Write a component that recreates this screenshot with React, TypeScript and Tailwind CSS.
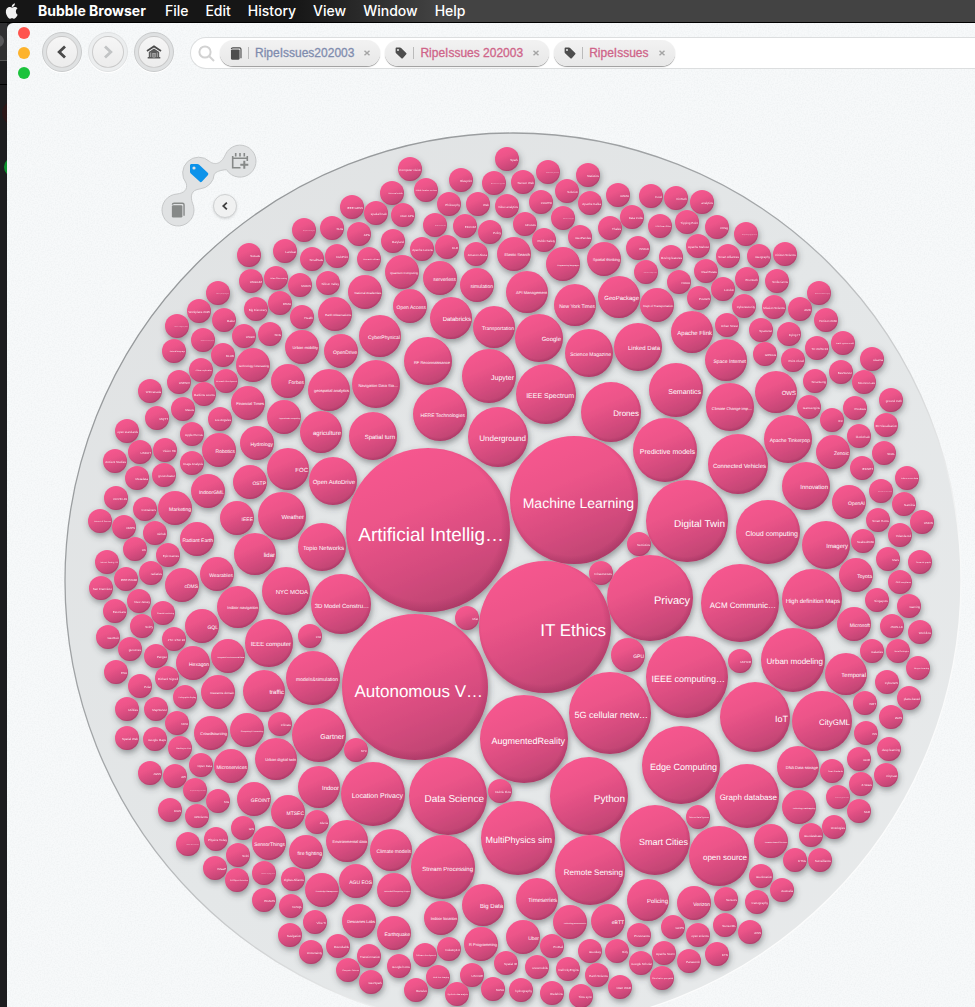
import React from "react";

type Bubble = [x: number, y: number, r: number, label: string];

const TOPICS: Bubble[] = [
  [428, 530, 82, "Artificial Intellig…"],
  [574, 500, 64, "Machine Learning"],
  [545, 627, 66, "IT Ethics"],
  [415, 687, 73, "Autonomous V…"],
  [524, 739, 44, "AugmentedReality"],
  [650, 598, 43, "Privacy"],
  [687, 521, 41, "Digital Twin"],
  [687, 677, 41, "IEEE computing…"],
  [610, 713, 41, "5G cellular netw…"],
  [448, 796, 39, "Data Science"],
  [589, 796, 39, "Python"],
  [740, 603, 39, "ACM Communic…"],
  [681, 765, 39, "Edge Computing"],
  [518, 838, 37, "MultiPhysics sim"],
  [590, 870, 35, "Remote Sensing"],
  [655, 840, 35, "Smart Cities"],
  [755, 717, 35, "IoT"],
  [768, 532, 32, "Cloud computing"],
  [665, 450, 32, "Predictive models"],
  [793, 660, 32, "Urban modeling"],
  [747, 796, 32, "Graph database"],
  [373, 794, 32, "Location Privacy"],
  [443, 867, 32, "Stream Processing"],
  [738, 464, 30, "Connected Vehicles"],
  [812, 599, 30, "High definition Maps"],
  [822, 721, 30, "CityGML"],
  [719, 856, 30, "open source"],
  [341, 604, 30, "3D Model Constru…"],
  [546, 394, 30, "IEEE Spectrum"],
  [611, 412, 30, "Drones"],
  [498, 437, 30, "Underground"],
  [489, 376, 27, "Jupyter"],
  [440, 414, 27, "HERE Technologies"],
  [676, 390, 27, "Semantics"],
  [313, 678, 27, "models&simulation"],
  [319, 735, 27, "Gartner"],
  [428, 361, 24, "RF Reconnaissance"],
  [539, 338, 24, "Google"],
  [376, 384, 24, "Navigation Data Sta…"],
  [589, 353, 24, "Science Magazine"],
  [638, 347, 24, "Linked Data"],
  [373, 436, 24, "Spatial turn"],
  [333, 481, 24, "Open AutoDrive"],
  [282, 516, 24, "Weather"],
  [322, 547, 24, "Topio Networks"],
  [286, 591, 24, "NYC MODA"],
  [269, 643, 24, "IEEE computer"],
  [730, 407, 24, "Climate Change imp…"],
  [788, 439, 24, "Apache Tinkerpop"],
  [806, 486, 24, "Innovation"],
  [826, 545, 24, "Imagery"],
  [527, 292, 21, "API Management"],
  [451, 318, 21, "Databricks"],
  [575, 305, 21, "New York Times"],
  [619, 297, 21, "GeoPackage"],
  [494, 327, 21, "Transportation"],
  [380, 336, 21, "CyberPhysical"],
  [329, 390, 21, "geospatial analytics"],
  [321, 432, 21, "agriculture"],
  [288, 469, 21, "FOC"],
  [255, 554, 21, "lidar"],
  [238, 607, 21, "Indoor navigation"],
  [264, 691, 21, "traffic"],
  [276, 759, 21, "Urban digital twin"],
  [319, 787, 21, "Indoor"],
  [347, 841, 21, "Environmental data"],
  [391, 850, 21, "Climate models"],
  [483, 905, 21, "Big Data"],
  [537, 899, 21, "Timeseries"],
  [648, 900, 21, "Policing"],
  [798, 767, 21, "DNA Data storage"],
  [846, 674, 21, "Temporal"],
  [692, 332, 21, "Apache Flink"],
  [726, 360, 21, "Space Internet"],
  [776, 392, 21, "OWS"],
  [514, 254, 17, "Elastic Search"],
  [402, 272, 17, "Quantum Computing"],
  [440, 278, 17, "serverless"],
  [477, 285, 17, "simulation"],
  [563, 264, 17, "Programming languages"],
  [604, 259, 17, "Spatial thinking"],
  [410, 306, 17, "Open Access"],
  [657, 305, 17, "Dept of Transportation"],
  [365, 292, 17, "National Academies"],
  [335, 314, 17, "Earth Observations"],
  [302, 347, 17, "Urban mobility"],
  [341, 351, 17, "OpenDrive"],
  [253, 365, 17, "technology forecasting"],
  [288, 381, 17, "Forbes"],
  [248, 403, 17, "Financial Times"],
  [284, 417, 17, "Approximate computing"],
  [257, 443, 17, "Hydrology"],
  [219, 450, 17, "Robotics"],
  [250, 482, 17, "OSTP"],
  [208, 491, 17, "IndoorGML"],
  [175, 508, 17, "Marketing"],
  [237, 518, 17, "IEEE"],
  [197, 539, 17, "Radiant Earth"],
  [182, 585, 17, "cDMS"],
  [217, 574, 17, "Wearables"],
  [202, 626, 17, "GQL"],
  [193, 663, 17, "Hexagon"],
  [228, 656, 17, "Integrated environmental data"],
  [218, 692, 17, "Insurance domain"],
  [211, 733, 17, "Crowdsourcing"],
  [247, 730, 17, "Computing & Accounting"],
  [231, 766, 17, "Microservices"],
  [254, 799, 17, "GEOINT"],
  [288, 812, 17, "MTSEC"],
  [269, 843, 17, "SensorThings"],
  [306, 852, 17, "fire fighting"],
  [322, 890, 17, "Knowledge Management"],
  [356, 881, 17, "AGU EOS"],
  [359, 921, 17, "Descartes Labs"],
  [394, 890, 17, "Extended Computing Project"],
  [441, 918, 17, "Indoor location"],
  [394, 933, 17, "Earthquake"],
  [570, 922, 17, "technology assessments"],
  [608, 921, 17, "eBTT"],
  [481, 944, 17, "R Programming"],
  [523, 937, 17, "Uber"],
  [799, 807, 17, "technology roadmapping"],
  [771, 841, 17, "Location Based Services"],
  [694, 903, 17, "Verizon"],
  [833, 452, 17, "Zenoic"],
  [849, 502, 17, "OpenAI"],
  [856, 575, 17, "Toyota"],
  [854, 624, 17, "Microsoft"],
  [628, 655, 17, "GPU"],
];

const SMALL: [number, number, string][] = [
  [507, 159, "Spark"], [410, 169, "Computer vision"], [461, 180, "Blueprint"],
  [548, 172, "Satellite Industry Association"], [588, 175, "Statistics"],
  [494, 183, "Environmental sensing network"], [523, 182, "Sensor Web"], [567, 191, "Solution"],
  [426, 190, "Mobile location services"], [449, 204, "Philosophy"], [478, 204, "Web"],
  [507, 206, "Video analytics"], [541, 202, "CUAHSI"], [590, 203, "Apache Kafka"],
  [392, 193, "Universal mobile"], [403, 215, "OGC APIs"], [618, 195, "GSMA"], [651, 196, "Food"],
  [676, 198, "FinTech"], [702, 202, "analytics"], [632, 217, "Data Cube"],
  [563, 218, "Natural hazards program"], [525, 224, "IoFuture"], [435, 225, "Satellite communications"],
  [465, 226, "EDCOM"], [490, 232, "Policy"], [610, 228, "Thales"], [660, 226, "USB Smart Cities"],
  [687, 222, "Tipping Point"], [544, 240, "Public Safety"], [580, 237, "GeoPandas"],
  [393, 241, "Maryland"], [422, 249, "Apache Lucene"], [447, 247, "DLR"], [476, 254, "Amazon Alexa"],
  [638, 248, "ISSDAI"], [671, 257, "Moving features"], [698, 246, "Apache Mahout"],
  [646, 272, "Autonomous mobility services"], [679, 282, "NOAA"], [706, 271, "Real Estate"],
  [699, 298, "PostGIS"], [352, 207, "IEEE GRSS"], [376, 213, "spatial brain"], [359, 234, "APIs"],
  [369, 259, "Research software"], [337, 256, "DubPrint"], [249, 255, "Sweats"], [285, 251, "Landsat"],
  [312, 259, "SmallSats"], [304, 230, "Atmospheric modeling data"], [332, 228, "SUG"],
  [251, 281, "UNGGIM"], [276, 278, "Urban Observatory"], [300, 285, "MODIS"],
  [328, 283, "Silicon Valley"], [218, 293, "Marine spatial planning data"], [199, 311, "Workplace 2025"],
  [224, 320, "Maker"], [256, 309, "Big Discovery"], [280, 303, "FEMA"], [302, 317, "Health"],
  [177, 326, "Business intelligence platform"], [203, 340, "Coordinate reference systems"],
  [244, 336, "USGIF"], [270, 334, "SDIs"], [174, 351, "Natural language"], [223, 355, "BLOB"],
  [201, 370, "African exploration"], [226, 381, "Research Development"], [179, 382, "USENIX"],
  [150, 391, "WFCanada"], [204, 394, "Maritime source"], [183, 409, "Mesos"], [157, 418, "MQTT"],
  [220, 419, "Los Angeles"], [127, 431, "open standards"], [192, 434, "Apple Purvue"],
  [140, 452, "USDOT"], [165, 450, "Vision HD"], [115, 461, "Ancient Studies"],
  [192, 463, "Image Analysis"], [137, 478, "Metadata"], [164, 475, "groundwater"],
  [116, 498, "COVID-19"], [145, 509, "Containers"], [100, 521, "Internet of Sensors"],
  [124, 527, "OMPS"], [155, 533, "Github"], [135, 549, "UK"], [168, 555, "Epic Games"],
  [107, 562, "Internet Society, UK"], [126, 579, "IEEE P2048"], [151, 573, "radiative"],
  [101, 588, "San Francisco"], [139, 601, "New Jersey"], [115, 611, "Estonians"],
  [163, 613, "Coastal monitoring"], [142, 626, "SciPy"], [108, 637, "GeoBuiz"],
  [174, 639, "JTC 1/SC 24"], [310, 636, "CIO"], [130, 649, "genomes"], [156, 656, "Pangeo"],
  [116, 672, "ESA"], [167, 678, "Richard Signell"], [140, 686, "Polar"], [185, 697, "Holographic display"],
  [127, 709, "Utilities"], [156, 709, "MapServer"], [177, 723, "NRO"], [280, 724, "Climate"],
  [127, 738, "Spatial Web"], [155, 739, "Google Maps"], [180, 748, "Washington Post"],
  [201, 765, "Open Data"], [356, 750, "NYC"], [150, 773, "JGSS"], [175, 776, "API"],
  [195, 790, "Geospatial knowledge infrastructure"], [218, 801, "SIG"], [170, 810, "DIAS"],
  [197, 816, "GIScience"], [317, 822, "Alexia"], [243, 828, "GIS"], [188, 844, "Medicine Based Informatics"],
  [216, 839, "Physics Today"], [238, 855, "SciFi"], [215, 868, "IMaaP"],
  [264, 873, "Distributed computing systems"], [237, 880, "3D Object Detection"],
  [293, 879, "Zigbee Alliance"], [264, 900, "EDAMS"], [291, 906, "NoSQL"], [315, 922, "Vibe TI"],
  [290, 935, "Navigation"], [338, 946, "Roundtable"], [311, 952, "Uncertainty"],
  [369, 956, "Transformation"], [348, 970, "Computer Science"], [371, 982, "GeoSpark"],
  [500, 791, "Debris Flow"], [399, 966, "Google home"], [425, 955, "Software development"],
  [449, 949, "Industry4.0"], [438, 977, "Real-time imaging"], [416, 990, "Benelux"],
  [457, 994, "Synthetic data analysis"], [472, 975, "US DOE"], [493, 989, "NASA"],
  [506, 963, "Spatial IR"], [521, 990, "hydrography"], [537, 967, "snowmobile"], [552, 946, "ProRail"],
  [552, 993, "Redshine"], [568, 969, "Dell CityEngine"], [590, 951, "Geodesy"], [581, 996, "Time sync"],
  [597, 975, "Earth Science"], [617, 951, "Bitly"], [620, 987, "OGC WAR"], [639, 935, "Provenance"],
  [641, 963, "Google Scholar"], [832, 771, "Smart Standards"], [698, 817, "Science Data Systems"],
  [859, 759, "GOR"], [866, 733, "ISS"], [891, 717, "IAMS"], [889, 749, "deep learning"],
  [861, 784, "Z-Wave"], [886, 775, "Citycast"], [838, 797, "Disaster management services"],
  [859, 811, "SAR"], [834, 827, "Ontologies"], [811, 835, "Geodatabase"], [795, 860, "DTMs"],
  [820, 860, "Surveillance"], [761, 876, "Geolocation"], [782, 890, "Australia"],
  [757, 902, "Cartography"], [726, 899, "Sensors"], [673, 927, "GCPS"], [725, 925, "SensorML"],
  [698, 935, "open science"], [750, 932, "AWS"], [664, 953, "Apache Storm"], [717, 954, "DTN"],
  [689, 961, "Panasonic"], [662, 978, "Cloud native geospatial"], [884, 453, "SDAL"],
  [862, 468, "IEDNET"], [859, 436, "blockchain"], [907, 478, "Indoor sensor data"],
  [881, 491, "Observation and measurement"], [904, 504, "Namibia"], [878, 520, "Smart Home"],
  [922, 522, "USDIN"], [900, 535, "Yolanda Gil"], [863, 541, "Seabed2030"], [888, 559, "Mars"],
  [920, 562, "Semantic graphs"], [900, 582, "OGC compliance"], [877, 600, "Singapore"],
  [909, 606, "Gaming"], [892, 626, "JSON-LD"], [920, 632, "Workflow"], [740, 661, "UNHCR"],
  [872, 651, "Galaxies"], [898, 651, "Meta Ontologies"], [918, 668, "Deeper Learning"],
  [887, 682, "CyberGIS"], [865, 703, "WRT"], [909, 698, "place-based"], [717, 227, "CReg"],
  [746, 234, "Computational geography science"], [728, 256, "Smart Alliances"], [759, 256, "Geography"],
  [785, 254, "Citizen Science"], [723, 289, "London"], [747, 279, "Econtech"], [777, 281, "Smile farms"],
  [744, 306, "Cybersecurity"], [774, 307, "Mission Science"], [800, 309, "AMD"],
  [819, 293, "Environmental Protection Agency"], [826, 320, "Horizon 2030"], [727, 325, "Urban Street"],
  [761, 330, "Spacenet"], [789, 334, "Dying IT"], [765, 354, "GRSGG"], [793, 360, "Point Cloud"],
  [817, 348, "TC 20/SC13"], [843, 343, "Earth system model"], [872, 359, "sisarna"],
  [841, 372, "BeeServer"], [864, 382, "Moore's Law"], [815, 381, "Smartsong"],
  [809, 407, "Gameengine"], [832, 420, "IFC"], [855, 408, "PostGus"], [891, 400, "ground truth"],
  [886, 425, "3D Visualisation"], [639, 544, "Semiotics"], [601, 573, "Infrastructure"], [467, 618, "Mist"],
];

const BUBBLES: Bubble[] = [...TOPICS, ...SMALL.map(([x, y, l]): Bubble => [x, y, 12, l])];

/** Preferred label size for each bubble radius. */
const LABEL_SIZE: Record<number, number> = {
  82: 19, 73: 19, 66: 17, 64: 17, 44: 10, 43: 11, 41: 10, 39: 10, 37: 9,
  35: 9, 32: 8, 30: 8, 27: 7, 24: 6, 21: 6, 17: 5, 12: 3,
};

const ctx = document.createElement("canvas").getContext("2d")!;
ctx.font = "100px 'Liberation Sans', Arial, sans-serif";

/** Largest whole-pixel size, up to the preferred one, at which the label fits its bubble. */
function labelSize(label: string, r: number) {
  const em = ctx.measureText(label).width / 100;
  return Math.max(1, Math.min(LABEL_SIZE[r], Math.floor((r * 1.82) / em)));
}

function Grain() {
  return (
    <svg className="pointer-events-none absolute inset-0 h-full w-full opacity-10" aria-hidden="true">
      <filter id="grain">
        <feTurbulence type="fractalNoise" baseFrequency="0.7" numOctaves="2" />
        <feColorMatrix values="0 0 0 0 0.35  0 0 0 0 0.4  0 0 0 0 0.42  0 0 0 -1.6 1" />
      </filter>
      <rect width="100%" height="100%" filter="url(#grain)" />
    </svg>
  );
}

function BubbleChart() {
  return (
    <svg viewBox="7 83 968 924" className="block w-full" role="img" aria-label="Topics tagged RipeIssues">
      <defs>
        <linearGradient id="pink" x1="0.3" y1="0" x2="0.72" y2="1">
          <stop offset="0" stopColor="#f7588f" />
          <stop offset="0.35" stopColor="#ec5489" />
          <stop offset="0.7" stopColor="#d34b7d" />
          <stop offset="1" stopColor="#ba4270" />
        </linearGradient>
        <radialGradient id="edge" cx="0.48" cy="0.47" r="0.54">
          <stop offset="0.86" stopColor="#7c1f48" stopOpacity="0" />
          <stop offset="1" stopColor="#7c1f48" stopOpacity="0.3" />
        </radialGradient>
        <linearGradient id="disc" x1="0" y1="0" x2="1" y2="1">
          <stop offset="0" stopColor="#e0e2e3" />
          <stop offset="0.5" stopColor="#e4e7e8" />
          <stop offset="1" stopColor="#e8eaeb" />
        </linearGradient>
        <linearGradient id="rim" x1="0" y1="0" x2="0.9" y2="1">
          <stop offset="0" stopColor="#8f9294" />
          <stop offset="0.45" stopColor="#a5a8aa" />
          <stop offset="0.75" stopColor="#f8f9f9" />
          <stop offset="1" stopColor="#ffffff" />
        </linearGradient>
        <filter id="shade" x="-5%" y="-5%" width="110%" height="110%">
          <feDropShadow dx="1" dy="3" stdDeviation="3" floodColor="#3a4044" floodOpacity="0.5" />
        </filter>
      </defs>
      <circle cx="513" cy="581" r="448" fill="url(#disc)" stroke="url(#rim)" strokeWidth="1.3" />
      <g filter="url(#shade)">
        {BUBBLES.map(([x, y, r], i) => (
          <circle key={i} cx={x} cy={y} r={r} fill="url(#pink)" />
        ))}
      </g>
      {BUBBLES.map(([x, y, r], i) => (
        <circle key={i} cx={x} cy={y} r={r} fill="url(#edge)" />
      ))}
      <g fill="#fff" textAnchor="end" textRendering="geometricPrecision" className="font-['Liberation_Sans',Arial,sans-serif]">
        {BUBBLES.map(([x, y, r, label], i) => {
          const size = labelSize(label, r);
          const inset = Math.max(1, Math.round(r * 0.07));
          return (
            <text key={i} x={x + r - inset} y={Math.round(y + r * 0.05 + size * 0.36)} fontSize={size} opacity={r > 12 ? 1 : 0.9}>
              {label}
            </text>
          );
        })}
      </g>
    </svg>
  );
}

function TagIcon({ className }: { className: string }) {
  return (
    <svg viewBox="0 0 20 20" className={className} aria-hidden="true">
      <path
        fill="currentColor"
        fillRule="evenodd"
        d="M1 2.6C1 1.600 1.600 1 2.600 1L8.200 1C9 1 9.700 1.300 10.200 1.800L18.700 9.800C19.500 10.600 19.500 11.500 18.800 12.200L13 18.600C12.300 19.300 11.300 19.300 10.600 18.600L1.800 10.500C1.300 10 1 9.400 1 8.700ZM5 6.600A1.600 1.600 0 1 0 5 3.400A1.600 1.600 0 1 0 5 6.600Z"
      />
    </svg>
  );
}

function BookIcon({ className }: { className: string }) {
  return (
    <svg viewBox="0 0 16 18" className={className} aria-hidden="true">
      <rect x="1" y="3.500" width="12" height="14" rx="1.500" fill="currentColor" />
      <path d="M1.500 2.800C1.700 1.600 2.400 1.200 3.600 1.200H13C14.200 1.200 14.900 1.900 14.900 3.100V15.500" fill="none" stroke="currentColor" strokeWidth="1.600" />
    </svg>
  );
}

function HomeIcon() {
  return (
    <svg viewBox="0 0 16 16" className="size-4" aria-hidden="true">
      <path d="M8 1.300L15.500 6.200L14.600 7.700L8 3.500L1.400 7.700L0.500 6.200Z" fill="#4a4a4a" />
      <path fillRule="evenodd" d="M8 4.600L13.200 8V13H14.300V14.500H1.700V13H2.800V8ZM6.600 9V13.300H9.400V9Z" fill="#5a5a5a" />
      <path d="M4.700 8.500V13M11.300 8.500V13" stroke="#bdbdbd" strokeWidth="0.800" />
      <path d="M7 9.300H9V13.300H7Z" fill="#8b8b8b" />
    </svg>
  );
}

function Chevron({ flip, className }: { flip?: boolean; className: string }) {
  return (
    <svg viewBox="0 0 12 16" className={className} fill="none" stroke="currentColor" strokeWidth="2.800" aria-hidden="true">
      <path d={flip ? "M3 2.500L8.800 8L3 13.500" : "M9 2.500L3.200 8L9 13.500"} />
    </svg>
  );
}

function NavButton({ label, disabled, children }: { label: string; disabled?: boolean; children: React.ReactNode }) {
  return (
    <button
      aria-label={label}
      disabled={disabled}
      className="flex size-10 items-center justify-center rounded-full border border-[#c9cbcc] bg-[#dfe1e2] text-[#4a4a4a] shadow-[0_1px_0_#fff] disabled:border-[#e0e2e3] disabled:bg-[#eceeef] disabled:text-[#c2c4c5]"
    >
      <span className="flex size-8 items-center justify-center rounded-full border border-black/15 bg-linear-to-b from-[#f6f6f6] to-[#ececec]">
        {children}
      </span>
    </button>
  );
}

function Chip({ icon, text, tone }: { icon: React.ReactNode; text: string; tone: string }) {
  return (
    <span className="flex h-[26px] shrink-0 items-center rounded-full bg-linear-to-b from-[#f2f2f2] to-[#e8e8e8] px-[10px] text-[#4d4d4d] shadow-[0_1px_1px_#9a9a9a]">
      {icon}
      <span className="mx-[6px] h-3 w-px bg-[#bbb]" />
      <span className={`text-xs leading-4 [-webkit-text-stroke:0.3px] ${tone}`}>{text}</span>
      <button aria-label={`Remove ${text}`} className="ml-[10px] text-[#a5a5a5]">
        <svg viewBox="0 0 6 6" className="size-[6px]" stroke="currentColor" strokeWidth="1.500" aria-hidden="true">
          <path d="M0.500 0.800L5.500 5.200M5.500 0.800L0.500 5.200" />
        </svg>
      </button>
    </span>
  );
}

function MenuBar() {
  return (
    <nav className="flex h-[23px] items-center border-b border-black bg-linear-to-r from-[#161616] from-30% to-[#434343] to-45% pl-[5px] font-[Inter,sans-serif] text-sm leading-5 text-white">
      <button aria-label="Apple menu">
        <svg viewBox="0 0 14 16" className="h-4 w-[14px]" fill="#f2f2f2" aria-hidden="true">
          <path d="M9.900 0.300C10 1.400 9.600 2.300 9 3C8.400 3.700 7.600 4.100 6.800 4C6.700 3 7.100 2.100 7.700 1.500C8.300 0.800 9.200 0.400 9.900 0.300ZM12.700 11.700C12.300 12.600 12.100 13 11.500 13.800C10.800 14.900 9.900 15.700 9.100 15.700C8.300 15.700 8 15.200 7 15.200C6 15.200 5.600 15.700 4.800 15.700C3.900 15.700 3.200 14.900 2.500 13.800C0.600 10.900 0.400 7.500 1.600 5.700C2.400 4.500 3.600 4 4.600 4C5.600 4 6.300 4.600 7.200 4.600C8.100 4.600 8.600 4 9.900 4C10.800 4 11.800 4.500 12.500 5.400C10.200 6.700 10.500 10.500 12.700 11.700Z" />
        </svg>
      </button>
      <button className="ml-[19px] font-bold">Bubble Browser</button>
      <div className="ml-[19px] flex gap-[17px] font-medium">
        <button>File</button>
        <button>Edit</button>
        <button>History</button>
        <button>View</button>
        <button>Window</button>
        <button>Help</button>
      </div>
    </nav>
  );
}

function FacetMenu() {
  return (
    <div className="absolute top-[60px] left-[152px] h-[86px] w-[100px]">
      <svg viewBox="159 143 100 86" className="block h-full w-full" aria-hidden="true">
        <path
          d="M186.200 183.200A16 16 0 0 1 209.500 161.400C214 165 221 165 225.500 154.400A16 16 0 1 1 226.500 169.700C220 170 216 172 214.300 174A16 16 0 0 1 200 188.900C191 190 190 196 192.500 203.200A16 16 0 1 1 177 194C184 193 188 190 186.200 183.200Z"
          fill="#e0e2e3"
          stroke="#c6c8c9"
        />
      </svg>
      <button aria-label="Collections" className="absolute top-[51px] left-[3px] flex size-8 items-center justify-center rounded-full text-[#868988]">
        <BookIcon className="h-4 w-[14px]" />
      </button>
      <button aria-label="Tags" className="absolute top-[14px] left-[24px] flex size-8 items-center justify-center rounded-full text-[#0d93ea]">
        <TagIcon className="size-5" />
      </button>
      <button aria-label="Add date" className="absolute top-[2px] left-[65px] flex size-8 items-center justify-center rounded-full text-[#868988]">
        <svg viewBox="0 0 18 18" className="size-[18px]" fill="none" stroke="currentColor" strokeWidth="1.600" aria-hidden="true">
          <path d="M1.700 4V15.700H9.500M1.700 6.300H16.300M16.300 4V9M4.700 1V4.500M9 1V4.500M13.300 1V4.500" />
          <path d="M13.300 8.800V16.800M9.300 12.800H17.300" strokeWidth="2" />
        </svg>
      </button>
      <button aria-label="Back" className="absolute top-[51px] left-[54px] flex size-6 items-center justify-center rounded-full border border-[#cfd1d2] bg-[#f0f1f1] text-[#3f3f3f] shadow-sm">
        <Chevron className="h-[10px] w-2" />
      </button>
    </div>
  );
}

export default function App() {
  return (
    <div className="flex min-h-screen flex-col overflow-hidden bg-[#1d1d1f] font-['Liberation_Sans',Arial,sans-serif]">
      <MenuBar />
      <div className="flex flex-1">
        <aside className="flex w-[7px] shrink-0 flex-col overflow-hidden">
          <div className="h-[38px] border-b border-[#555] bg-[#303032] pt-3">
            <div className="-ml-2 size-3 rounded-full bg-[#58585a]" />
          </div>
          <div className="h-6 border-b border-black" />
          <div className="mt-4 ml-[2px] size-6 rounded-full bg-[#2c1718]" />
          <div className="mt-8 ml-1 size-5 rounded-full bg-[#0c8f2c]" />
        </aside>
        <main className="relative min-w-0 flex-1 overflow-hidden rounded-tl-md bg-[#f7f9fa]">
          <Grain />
          <header className="relative flex h-[60px]">
            <div className="ml-[11px] flex flex-col gap-2 pt-1">
              <button aria-label="Close window" className="size-3 rounded-full bg-[#ff544d]" />
              <button aria-label="Minimize window" className="size-3 rounded-full bg-[#fdb32c]" />
              <button aria-label="Zoom window" className="size-3 rounded-full bg-[#1bc33c]" />
            </div>
            <div className="mt-[9px] ml-3 flex gap-[6px]">
              <NavButton label="Back"><Chevron className="h-4 w-3" /></NavButton>
              <NavButton label="Forward" disabled><Chevron flip className="h-4 w-3" /></NavButton>
              <NavButton label="Home"><HomeIcon /></NavButton>
            </div>
            <form className="mt-[14px] ml-4 flex h-8 min-w-0 flex-1 items-center gap-[5px] rounded-l-full border border-r-0 border-[#dcdedf] bg-white pl-[7px]">
              <svg viewBox="0 0 17 17" className="size-[17px] shrink-0" fill="none" stroke="#d2d2d2" strokeWidth="2" aria-hidden="true">
                <circle cx="7" cy="7" r="5.600" />
                <path d="M11 11L16 16" />
              </svg>
              <Chip icon={<BookIcon className="h-[13px] w-3" />} text="RipeIssues202003" tone="text-[#7f8cae]" />
              <Chip icon={<TagIcon className="size-3" />} text="RipeIssues 202003" tone="text-[#cf6489]" />
              <Chip icon={<TagIcon className="size-3" />} text="RipeIssues" tone="text-[#cf6489]" />
              <input aria-label="Search" className="min-w-0 flex-1 bg-transparent text-xs outline-none" />
            </form>
          </header>
          <section className="relative">
            <BubbleChart />
            <FacetMenu />
          </section>
        </main>
      </div>
    </div>
  );
}
